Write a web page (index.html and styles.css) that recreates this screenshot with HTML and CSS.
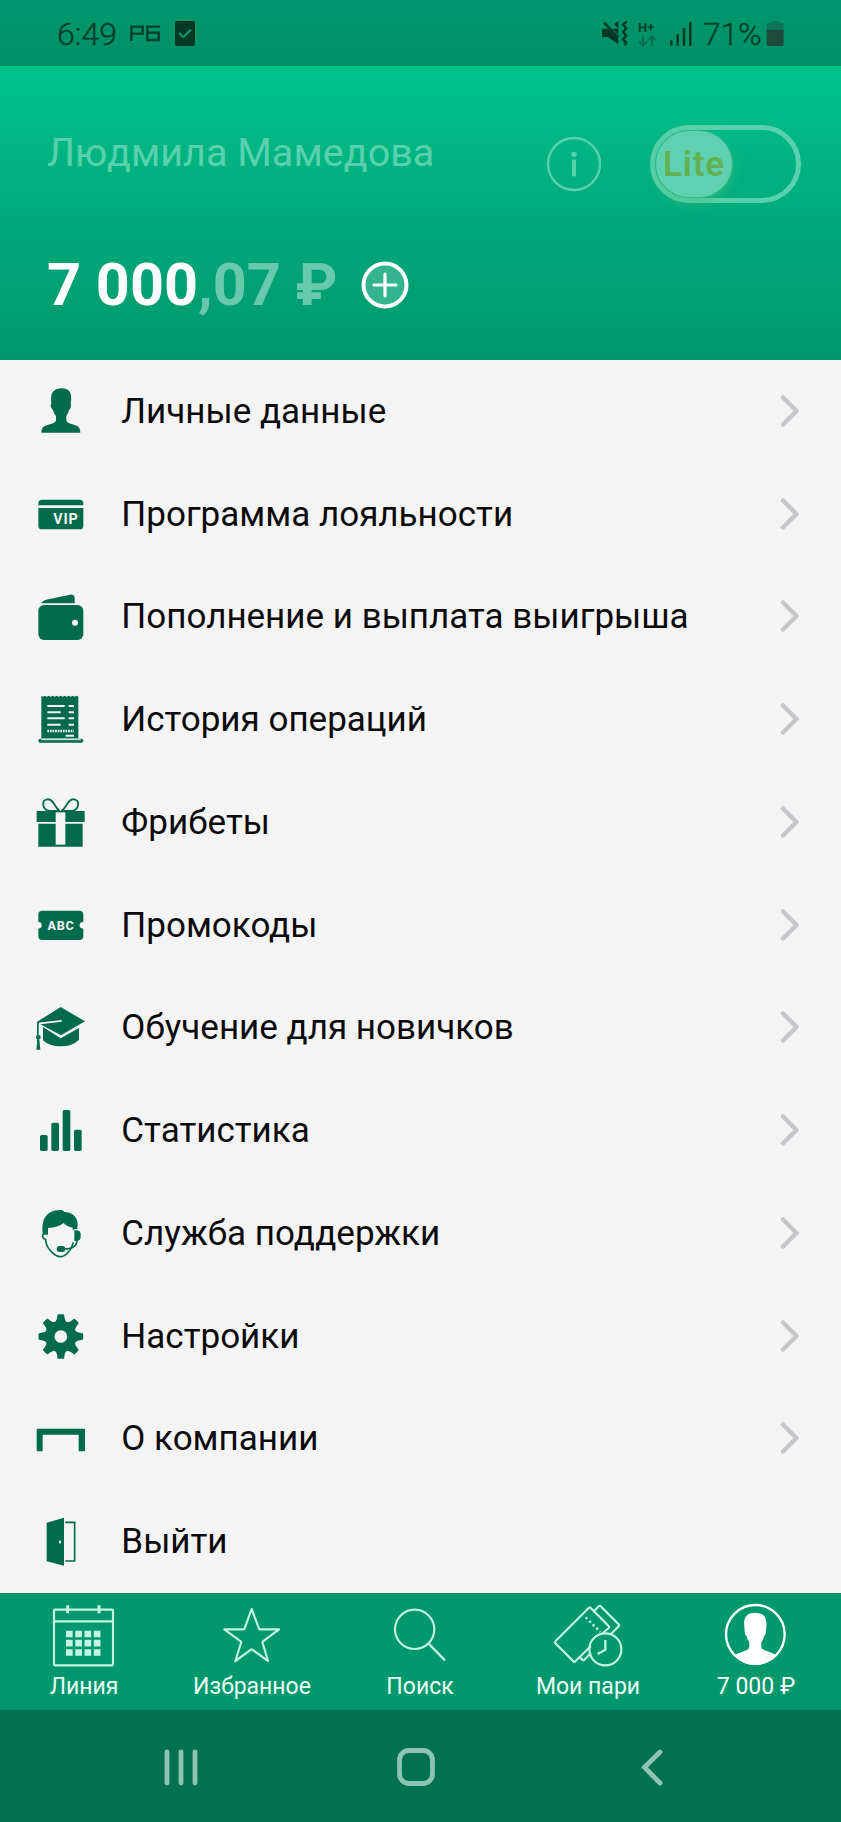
FILE: index.html
```html
<!DOCTYPE html>
<html lang="ru">
<head>
<meta charset="utf-8">
<title>Профиль</title>
<link rel="stylesheet" href="styles.css">
</head>
<body>
<div class="status">
  <span class="clock">6:49</span>
  <svg class="st-left" width="72" height="66" viewBox="384 0 216 198" fill="none">
    <path d="M394 123V80H428V101H394M480 80H442V120H476V98H442" stroke="#053f2b" stroke-width="7"/>
    <rect x="525" y="63" width="60" height="75" rx="6" fill="#053827"/>
    <path d="M537 99l13 12 23-22" stroke="#0a9369" stroke-width="7"/>
  </svg>
  <svg class="st-right" width="98" height="66" viewBox="534 0 294 198" fill="none">
    <path d="M543 86h18l31-0v47l-31-22h-18zM579 73l13-10v23z" fill="#053827"/>
    <path d="M549 67l47 47" stroke="#00936a" stroke-width="9"/>
    <path d="M549 68l43 44" stroke="#053827" stroke-width="7"/>
    <path d="M618 64l-12 10 10 11-10 11 10 11-10 11 10 10-6 8" stroke="#053827" stroke-width="7"/>
    <text x="651" y="97" class="hplus">H+</text>
    <path d="M666 109v28M654 125l12 12 12-12M693 137v-28M681 121l12-12 12 12" stroke="#0b6d4f" stroke-width="6"/>
    <path d="M751 124v10M770 106v28M789 87v47M808 69v65" stroke="#053827" stroke-width="7.500" stroke-linecap="round"/>
  </svg>
  <span class="percent">71%</span>
  <svg class="battery" width="18" height="66" viewBox="1036 0 54 198">
    <path d="M1038 92V72q0-3 3-3h11v-6h24v6h10q3 0 3 3v20z" fill="#0d7657"/>
    <path d="M1038 90h51v43q0 5-5 5h-41q-5 0-5-5z" fill="#1d4a3a"/>
  </svg>
</div>

<header class="header">
  <div class="top-row">
    <span class="name">Людмила Мамедова</span>
    <svg class="info" width="56" height="56" viewBox="374 407 168 168" fill="none">
      <circle cx="458" cy="491" r="78" stroke="#5ad1ae" stroke-width="7"/>
      <circle cx="458" cy="462" r="8" fill="#5ad1ae"/>
      <path d="M458 478v50" stroke="#5ad1ae" stroke-width="12"/>
    </svg>
    <span class="toggle"><span class="knob">Lite</span></span>
  </div>
  <div class="balance">
    <span class="sum">7 000<span class="cents">,07 ₽</span></span>
    <svg class="plus" width="48" height="48" viewBox="0 0 48 48" fill="none">
      <circle cx="24" cy="24" r="21.500" fill="#34b48e" stroke="#fff" stroke-width="4"/>
      <path d="M24 13v22M13 24h22" stroke="#fff" stroke-width="3.200" stroke-linecap="round"/>
    </svg>
  </div>
</header>

<main class="menu">
  <a class="item">
    <svg class="icon" viewBox="41 42 160 160"><path d="M63 188q0-15 10-20c13-5 34-7 34-18v-12q-7-8-9-18-6-3-7-13 1-5 2-6c-3-24 0-45 29-46 29 0 34 17 29 46q2 2 1 7-1 9-6 12-2 10-8 18v12c0 11 22 13 33 18q9 5 9 20z"/></svg>
    <span class="label">Личные данные</span>
    <svg class="chev" viewBox="0 0 22 34"><path d="M4 3.500l13.500 13.500L4 30.500"/></svg>
  </a>
  <a class="item">
    <svg class="icon" viewBox="41 350 160 160"><path d="M54 405v-6q0-11 11-11h113q11 0 11 11v6zM54 413h135v53q0 11-11 11H65q-11 0-11-11z"/><text x="99" y="461" class="t-vip">VIP</text></svg>
    <span class="label">Программа лояльности</span>
    <svg class="chev" viewBox="0 0 22 34"><path d="M4 3.500l13.500 13.500L4 30.500"/></svg>
  </a>
  <a class="item">
    <svg class="icon" viewBox="41 659 160 160"><path d="M62 699q6-9 15-11l72-15q12-2 14 9v17z"/><rect x="54" y="704" width="135" height="105" rx="17"/><circle class="hole" cx="164" cy="757" r="9"/></svg>
    <span class="label">Пополнение и выплата выигрыша</span>
    <svg class="chev" viewBox="0 0 22 34"><path d="M4 3.500l13.500 13.500L4 30.500"/></svg>
  </a>
  <a class="item">
    <svg class="icon" viewBox="41 67 160 160"><path d="M63 78l5 3 5-3 6 3 6-3 6 3 6-3 6 3 6-3 6 3 6-3 6 3 6-3 6 3 6-3 6 3 6-3 6 3 6-3 5 3V206H63z"/><rect x="54" y="207" width="135" height="12" rx="6"/><path class="cut" stroke-width="3" d="M62 210h119"/><path class="cut" stroke-width="6" d="M81 109h52M145 109h16M81 128h40M145 128h16M81 146h52M145 146h16M81 165h40M145 165h16M136 198h25"/><path class="cut" stroke-width="7" stroke-dasharray="5 2.800" d="M81 184h80"/></svg>
    <span class="label">История операций</span>
    <svg class="chev" viewBox="0 0 22 34"><path d="M4 3.500l13.500 13.500L4 30.500"/></svg>
  </a>
  <a class="item">
    <svg class="icon" viewBox="41 375 160 160"><path d="M49 423h144v33H49zM54 461h133v69H54z"/><path class="hole" d="M106 427h29v97h-29z"/><path class="line" stroke-width="5.500" d="M119 423H87C66 419 62 392 80 388c20-3 23 26 39 35M123 423h32c21-4 25-31 7-35-20-3-23 26-39 35"/></svg>
    <span class="label">Фрибеты</span>
    <svg class="chev" viewBox="0 0 22 34"><path d="M4 3.500l13.500 13.500L4 30.500"/></svg>
  </a>
  <a class="item">
    <svg class="icon" viewBox="41 684 160 160"><rect x="54" y="722" width="135" height="88" rx="12"/><circle class="hole" cx="54" cy="766" r="10"/><circle class="hole" cx="188" cy="766" r="10"/><text x="122" y="780" text-anchor="middle" class="t-abc">ABC</text></svg>
    <span class="label">Промокоды</span>
    <svg class="chev" viewBox="0 0 22 34"><path d="M4 3.500l13.500 13.500L4 30.500"/></svg>
  </a>
  <a class="item">
    <svg class="icon" viewBox="41 62 160 160"><path d="M121 80l73 43-72 42-62-33 64-8v-5l-72 8-4-1zM68 140l53 34 55-31v35q-20 20-55 20t-53-18z"/><path class="line" stroke-width="5" d="M53 125l-1 57"/><circle cx="54" cy="171" r="7"/><path d="M51 178h6l3 30H48z"/></svg>
    <span class="label">Обучение для новичков</span>
    <svg class="chev" viewBox="0 0 22 34"><path d="M4 3.500l13.500 13.500L4 30.500"/></svg>
  </a>
  <a class="item">
    <svg class="icon" viewBox="41 370 160 160"><rect x="59" y="466" width="23" height="48" rx="5"/><rect x="93" y="429" width="23" height="85" rx="5"/><rect x="127" y="391" width="23" height="123" rx="5"/><rect x="161" y="450" width="23" height="64" rx="5"/></svg>
    <span class="label">Статистика</span>
    <svg class="chev" viewBox="0 0 22 34"><path d="M4 3.500l13.500 13.500L4 30.500"/></svg>
  </a>
  <a class="item">
    <svg class="icon" viewBox="41 678 160 160"><path d="M68 764c-6-38 4-74 53-74 8 0 8 6 14 6 27 1 41 21 36 51h-8l-6 4v-8q-17-3-27-14-17 14-47 15v20z"/><path class="line" stroke-width="5" d="M71 761c-7 3-5 16 5 18 1 29 31 51 44 51 15 0 34-19 39-43"/><path d="M162 751h8q11 2 11 12v8q0 10-11 12h-8z"/><path class="line" stroke-width="5" d="M170 780c0 20-14 27-40 27"/><rect x="109" y="798" width="26" height="18" rx="9"/></svg>
    <span class="label">Служба поддержки</span>
    <svg class="chev" viewBox="0 0 22 34"><path d="M4 3.500l13.500 13.500L4 30.500"/></svg>
  </a>
  <a class="item">
    <svg class="icon" viewBox="41 87 160 160"><g transform="translate(121.500 169.500)"><circle r="47"/><g id="teeth"><path id="tooth" d="M-18-42q6-6 7-15l1-8q0-2 3-2H7q3 0 3 2l1 8q1 9 7 15zM-18 42q6 6 7 15l1 8q0 2 3 2H7q3 0 3-2l1-8q1-9 7-15z"/><use href="#tooth" transform="rotate(90)"/></g><use href="#teeth" transform="rotate(45)"/><circle class="hole" r="19"/></g></svg>
    <span class="label">Настройки</span>
    <svg class="chev" viewBox="0 0 22 34"><path d="M4 3.500l13.500 13.500L4 30.500"/></svg>
  </a>
  <a class="item">
    <svg class="icon" viewBox="41 395 160 160"><path d="M51 445h141q2 0 2 2v64q0 2-2 2h-15q-2 0-2-2v-48H67v48q0 2-2 2H51q-2 0-2-2v-64q0-2 2-2z"/></svg>
    <span class="label">О компании</span>
    <svg class="chev" viewBox="0 0 22 34"><path d="M4 3.500l13.500 13.500L4 30.500"/></svg>
  </a>
  <a class="item">
    <svg class="icon" viewBox="41 703 160 160"><path d="M79 729l52-15v144l-52-13z"/><ellipse class="hole" cx="119" cy="787" rx="3" ry="5"/><path class="line" stroke-width="5" d="M135 728h28v116h-28"/></svg>
    <span class="label">Выйти</span>
  </a>
</main>

<nav class="tabs">
  <a class="tab">
    <svg viewBox="148 66 210 198"><rect x="163" y="86" width="177" height="167" rx="3"/><path d="M163 121h177"/><path d="M204 73v24M298 73v24" stroke-width="9"/><path class="grid" d="M199 159h104M199 186.500h104M199 214.500h104"/></svg>
    <span>Линия</span>
  </a>
  <a class="tab">
    <svg viewBox="652 66 210 198"><path d="M756 84l22 59q0 2 3 2h57l-48 36q-2 2-1 5l16 54-47-34q-2-2-4 0l-47 34 17-54q1-3-1-5l-49-36h57q3 0 4-3z"/></svg>
    <span>Избранное</span>
  </a>
  <a class="tab">
    <svg viewBox="1156 66 210 198"><circle cx="1245" cy="145" r="59"/><path d="M1287 188l49 50" stroke-width="7"/></svg>
    <span>Поиск</span>
  </a>
  <a class="tab">
    <svg viewBox="400 66 210 198"><path d="M407 181L507 81q3-3 6 0l54 54q3 3 0 6l-17 15M407 181q-2 3 0 6l54 54q3 3 6 0l46-45M523 91l14-15q3-3 6 0l54 54q3 3 0 6l-23 23M480 229l8 7q3 3 6 0l20-20"/><path d="M498 109l44 44" stroke-width="7" stroke-dasharray="7 8"/><circle cx="557" cy="205" r="48"/><path d="M557 177v29l-23 13" stroke-width="7"/></svg>
    <span>Мои пари</span>
  </a>
  <a class="tab active">
    <svg viewBox="904 66 210 198"><circle cx="1007" cy="160" r="88"/><path class="solid" d="M948 221c15-9 41-12 41-23v-14q-7-8-8-19-5-3-6-13v-5c-4-29-2-49 26-51l8 0c25 0 35 13 30 51v5q-1 10-6 13-1 11-8 19v14c0 11 28 14 42 23q-24 31-60 31t-59-31z"/></svg>
    <span>7 000 ₽</span>
  </a>
</nav>

<footer class="system">
  <svg width="36" height="40" viewBox="0 0 36 40"><path d="M4 5v31M18 5v31M32 5v31"/></svg>
  <svg width="40" height="40" viewBox="0 0 40 40"><rect x="3.500" y="3.500" width="33" height="33" rx="9.500"/></svg>
  <svg width="24" height="40" viewBox="0 0 24 40"><path d="M20 5L4.500 20.300 20 36"/></svg>
</footer>
</body>
</html>
```
FILE: styles.css
```css
* { box-sizing: border-box; }
body {
  margin: 0;
  width: 841px;
  height: 1822px;
  display: flex;
  flex-direction: column;
  overflow: hidden;
  background: #f4f4f4;
  font-family: Roboto, "Noto Sans", sans-serif;
}
svg { display: block; flex: none; }

.status {
  height: 66px;
  flex: none;
  display: flex;
  align-items: center;
  padding-left: 57px;
  background: linear-gradient(#00976e, #008f65);
  color: #053f2b;
  font-size: 32px;
  font-weight: 300;
  -webkit-text-stroke: .4px #053f2b;
}
.clock { width: 71px; line-height: 66px; padding-top: 1px; }
.st-right { margin-left: 399px; }
.percent { width: 63px; margin-left: 6px; line-height: 66px; padding-top: 1px; white-space: nowrap; letter-spacing: -.3px; }
.hplus { font-size: 39px; font-weight: 700; fill: #053f2b; }

.header {
  height: 293.5px;
  flex: none;
  background: linear-gradient(#00c48c, #00a97b 52%, #01986c);
}
.top-row { display: flex; align-items: flex-start; padding: 59px 40.5px 0 47px; height: 154px; }
.name { flex: 1; padding-top: 1px; font-size: 39.6px; line-height: 54px; color: #5ad1ae; white-space: nowrap; }
.info { margin-top: 11px; margin-right: 48px; }
.toggle {
  width: 150.5px;
  height: 78px;
  flex: none;
  border: 5px solid #5ad1ae;
  border-radius: 39px;
}
.knob {
  display: block;
  width: 76px;
  height: 66px;
  margin: 1px;
  padding-top: 1px;
  border-radius: 33px;
  background: #5fd0b0;
  box-shadow: 0 5px 14px rgba(70, 190, 120, .55), 0 0 0 1px #2db98f;
  color: #62b052;
  font-size: 35px;
  font-weight: 600;
  line-height: 66px;
  text-align: center;
  letter-spacing: .8px;
}
.balance { display: flex; align-items: center; height: 130px; padding-left: 47px; }
.sum { width: 314px; font-size: 59.4px; font-weight: 700; line-height: 70px; color: #fff; white-space: nowrap; }
.cents { color: #68c9ad; }

.menu { height: 1233px; flex: none; display: grid; grid-template-rows: repeat(12, 1fr); }
.item { display: flex; align-items: center; padding: 0 40.5px 0 33.5px; }
.icon { width: 53.33px; height: 53.33px; fill: #036b4c; }
.hole { fill: #f4f4f4; }
.cut { fill: none; stroke: #f4f4f4; }
.line { fill: none; stroke: #036b4c; }
.t-vip { font-size: 43px; font-weight: 700; fill: #f4f4f4; letter-spacing: 2.5px; }
.t-abc { font-size: 38px; font-weight: 700; fill: #f4f4f4; letter-spacing: 2px; }
.label { flex: 1; padding: 2px 0 0 34.5px; font-size: 35px; line-height: 44px; color: #0a0a0a; white-space: nowrap; }
.chev { width: 22px; height: 34px; }
.chev path { fill: none; stroke: #c6c6ca; stroke-width: 4.5; stroke-linecap: round; stroke-linejoin: round; }

.tabs { height: 117px; flex: none; display: grid; grid-template-columns: repeat(5, 1fr); padding-right: 1px; background: #01986d; border-top: 1px solid #1b8765; }
.tab { display: flex; flex-direction: column; align-items: center; padding-top: 9px; font-size: 23px; line-height: 30px; color: #eafff7; white-space: nowrap; }
.tab span { margin-top: 3px; }
.tab svg { width: 70px; height: 66px; fill: none; stroke: #c4f3e1; stroke-width: 6.5; stroke-linejoin: round; stroke-linecap: butt; }
.tab .grid { stroke-width: 20; stroke-dasharray: 20 7.800; }
.tab.active { color: #fff; }
.tab.active svg { stroke: #fff; stroke-width: 7; }
.tab .solid { fill: #fff; stroke: none; }

.system { height: 112.5px; flex: none; display: grid; grid-template-columns: repeat(3, 235.5px); justify-items: center; align-items: center; padding: 3px 0 0 63px; background: #01714f; }
.system svg { fill: none; stroke: #8fc4b2; stroke-width: 4.800; stroke-linecap: round; stroke-linejoin: miter; }
```
